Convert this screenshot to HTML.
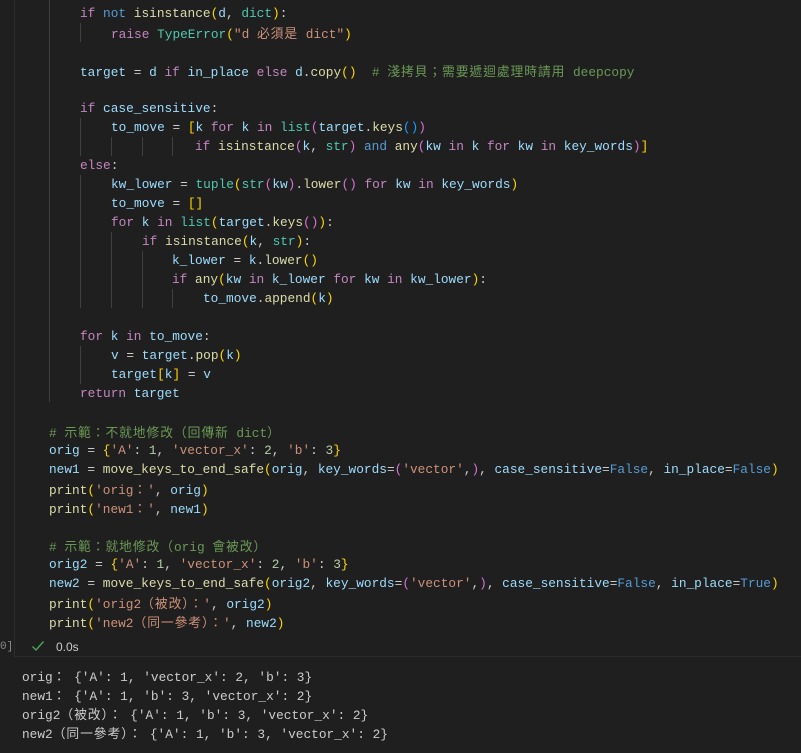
<!DOCTYPE html>
<html><head><meta charset="utf-8"><style>
html,body{margin:0;padding:0;background:#1f1f1f;width:801px;height:753px;overflow:hidden}
.ed{position:absolute;left:0;top:0;width:801px;height:656px;background:#1f1f1f}
.cellL{position:absolute;left:14px;top:0;width:1px;height:656px;background:#2b2b2b}
.cellB{position:absolute;left:14px;top:656px;width:787px;height:1px;background:#2b2b2b}
.g{position:absolute;width:1px;background:#404040}
.l{position:absolute;white-space:pre;font-family:"Liberation Mono","Noto Sans CJK TC",monospace;font-size:12.8px;line-height:19px;color:#cccccc}
.z{letter-spacing:0.9px;font-family:"Noto Sans CJK TC","Liberation Mono",monospace}
.k{color:#c586c0}.b{color:#569cd6}.v{color:#9cdcfe}.f{color:#dcdcaa}.t{color:#4ec9b0}.s{color:#ce9178}.c{color:#6a9955}.n{color:#b5cea8}
.p1{color:#ffd700}.p2{color:#da70d6}.p3{color:#179fff}
.o{color:#cccccc}
</style></head><body>
<div class="ed"></div>
<div class="cellL"></div><div class="cellB"></div>
<div class="g" style="left:49px;top:0;height:402px"></div>
<div class="g" style="left:80px;top:23px;height:19px"></div>
<div class="g" style="left:80px;top:118px;height:38px"></div>
<div class="g" style="left:111px;top:137px;height:19px"></div>
<div class="g" style="left:142px;top:137px;height:19px"></div>
<div class="g" style="left:172px;top:137px;height:19px"></div>
<div class="g" style="left:80px;top:175px;height:133px"></div>
<div class="g" style="left:111px;top:232px;height:76px"></div>
<div class="g" style="left:142px;top:251px;height:57px"></div>
<div class="g" style="left:172px;top:289px;height:19px"></div>
<div class="g" style="left:80px;top:346px;height:38px"></div>

<div class="l" style="left:80px;top:4px"><span class="k">if</span> <span class="b">not</span> <span class="f">isinstance</span><span class="p1">(</span><span class="v">d</span>, <span class="t">dict</span><span class="p1">)</span>:</div>
<div class="l" style="left:111px;top:23px"><span class="k">raise</span> <span class="t">TypeError</span><span class="p1">(</span><span class="s">"d <span class="z">必須是</span> dict"</span><span class="p1">)</span></div>
<div class="l" style="left:80px;top:61px"><span class="v">target</span> = <span class="v">d</span> <span class="k">if</span> <span class="v">in_place</span> <span class="k">else</span> <span class="v">d</span>.<span class="f">copy</span><span class="p1">()</span>  <span class="c"># <span class="z">淺拷貝；需要遞迴處理時請用</span> deepcopy</span></div>
<div class="l" style="left:80px;top:99px"><span class="k">if</span> <span class="v">case_sensitive</span>:</div>
<div class="l" style="left:111px;top:118px"><span class="v">to_move</span> = <span class="p1">[</span><span class="v">k</span> <span class="k">for</span> <span class="v">k</span> <span class="k">in</span> <span class="t">list</span><span class="p2">(</span><span class="v">target</span>.<span class="f">keys</span><span class="p3">()</span><span class="p2">)</span></div>
<div class="l" style="left:195px;top:137px"><span class="k">if</span> <span class="f">isinstance</span><span class="p2">(</span><span class="v">k</span>, <span class="t">str</span><span class="p2">)</span> <span class="b">and</span> <span class="f">any</span><span class="p2">(</span><span class="v">kw</span> <span class="k">in</span> <span class="v">k</span> <span class="k">for</span> <span class="v">kw</span> <span class="k">in</span> <span class="v">key_words</span><span class="p2">)</span><span class="p1">]</span></div>
<div class="l" style="left:80px;top:156px"><span class="k">else</span>:</div>
<div class="l" style="left:111px;top:175px"><span class="v">kw_lower</span> = <span class="t">tuple</span><span class="p1">(</span><span class="t">str</span><span class="p2">(</span><span class="v">kw</span><span class="p2">)</span>.<span class="f">lower</span><span class="p2">()</span> <span class="k">for</span> <span class="v">kw</span> <span class="k">in</span> <span class="v">key_words</span><span class="p1">)</span></div>
<div class="l" style="left:111px;top:194px"><span class="v">to_move</span> = <span class="p1">[]</span></div>
<div class="l" style="left:111px;top:213px"><span class="k">for</span> <span class="v">k</span> <span class="k">in</span> <span class="t">list</span><span class="p1">(</span><span class="v">target</span>.<span class="f">keys</span><span class="p2">()</span><span class="p1">)</span>:</div>
<div class="l" style="left:142px;top:232px"><span class="k">if</span> <span class="f">isinstance</span><span class="p1">(</span><span class="v">k</span>, <span class="t">str</span><span class="p1">)</span>:</div>
<div class="l" style="left:172px;top:251px"><span class="v">k_lower</span> = <span class="v">k</span>.<span class="f">lower</span><span class="p1">()</span></div>
<div class="l" style="left:172px;top:270px"><span class="k">if</span> <span class="f">any</span><span class="p1">(</span><span class="v">kw</span> <span class="k">in</span> <span class="v">k_lower</span> <span class="k">for</span> <span class="v">kw</span> <span class="k">in</span> <span class="v">kw_lower</span><span class="p1">)</span>:</div>
<div class="l" style="left:203px;top:289px"><span class="v">to_move</span>.<span class="f">append</span><span class="p1">(</span><span class="v">k</span><span class="p1">)</span></div>
<div class="l" style="left:80px;top:327px"><span class="k">for</span> <span class="v">k</span> <span class="k">in</span> <span class="v">to_move</span>:</div>
<div class="l" style="left:111px;top:346px"><span class="v">v</span> = <span class="v">target</span>.<span class="f">pop</span><span class="p1">(</span><span class="v">k</span><span class="p1">)</span></div>
<div class="l" style="left:111px;top:365px"><span class="v">target</span><span class="p1">[</span><span class="v">k</span><span class="p1">]</span> = <span class="v">v</span></div>
<div class="l" style="left:80px;top:384px"><span class="k">return</span> <span class="v">target</span></div>

<div class="l" style="left:49px;top:422px"><span class="c"># <span class="z">示範：不就地修改（回傳新</span> dict）</span></div>
<div class="l" style="left:49px;top:441px"><span class="v">orig</span> = <span class="p1">{</span><span class="s">'A'</span>: <span class="n">1</span>, <span class="s">'vector_x'</span>: <span class="n">2</span>, <span class="s">'b'</span>: <span class="n">3</span><span class="p1">}</span></div>
<div class="l" style="left:49px;top:460px"><span class="v">new1</span> = <span class="f">move_keys_to_end_safe</span><span class="p1">(</span><span class="v">orig</span>, <span class="v">key_words</span>=<span class="p2">(</span><span class="s">'vector'</span>,<span class="p2">)</span>, <span class="v">case_sensitive</span>=<span class="b">False</span>, <span class="v">in_place</span>=<span class="b">False</span><span class="p1">)</span></div>
<div class="l" style="left:49px;top:479px"><span class="f">print</span><span class="p1">(</span><span class="s">'orig<span class="z">：</span>'</span>, <span class="v">orig</span><span class="p1">)</span></div>
<div class="l" style="left:49px;top:498px"><span class="f">print</span><span class="p1">(</span><span class="s">'new1<span class="z">：</span>'</span>, <span class="v">new1</span><span class="p1">)</span></div>
<div class="l" style="left:49px;top:536px"><span class="c"># <span class="z">示範：就地修改（</span>orig <span class="z">會被改）</span></span></div>
<div class="l" style="left:49px;top:555px"><span class="v">orig2</span> = <span class="p1">{</span><span class="s">'A'</span>: <span class="n">1</span>, <span class="s">'vector_x'</span>: <span class="n">2</span>, <span class="s">'b'</span>: <span class="n">3</span><span class="p1">}</span></div>
<div class="l" style="left:49px;top:574px"><span class="v">new2</span> = <span class="f">move_keys_to_end_safe</span><span class="p1">(</span><span class="v">orig2</span>, <span class="v">key_words</span>=<span class="p2">(</span><span class="s">'vector'</span>,<span class="p2">)</span>, <span class="v">case_sensitive</span>=<span class="b">False</span>, <span class="v">in_place</span>=<span class="b">True</span><span class="p1">)</span></div>
<div class="l" style="left:49px;top:593px"><span class="f">print</span><span class="p1">(</span><span class="s">'orig2<span class="z">（被改）：</span>'</span>, <span class="v">orig2</span><span class="p1">)</span></div>
<div class="l" style="left:49px;top:612px"><span class="f">print</span><span class="p1">(</span><span class="s">'new2<span class="z">（同一參考）：</span>'</span>, <span class="v">new2</span><span class="p1">)</span></div>

<div class="l" style="left:0px;top:638px;color:#8a8a8a;font-size:11px">0]</div>
<svg style="position:absolute;left:31px;top:640px" width="14" height="12" viewBox="0 0 14 12"><path d="M1.5 6.5 L5 10 L12.5 1.5" fill="none" stroke="#4ea35a" stroke-width="1.4"/></svg>
<div class="l" style="left:56px;top:638px;font-family:'Liberation Sans',sans-serif;font-size:12px;color:#cccccc">0.0s</div>

<div class="l o" style="left:22px;top:666px">orig<span class="z">：</span> {'A': 1, 'vector_x': 2, 'b': 3}</div>
<div class="l o" style="left:22px;top:685px">new1<span class="z">：</span> {'A': 1, 'b': 3, 'vector_x': 2}</div>
<div class="l o" style="left:22px;top:704px">orig2<span class="z">（被改）：</span> {'A': 1, 'b': 3, 'vector_x': 2}</div>
<div class="l o" style="left:22px;top:723px">new2<span class="z">（同一參考）：</span> {'A': 1, 'b': 3, 'vector_x': 2}</div>
</body></html>
